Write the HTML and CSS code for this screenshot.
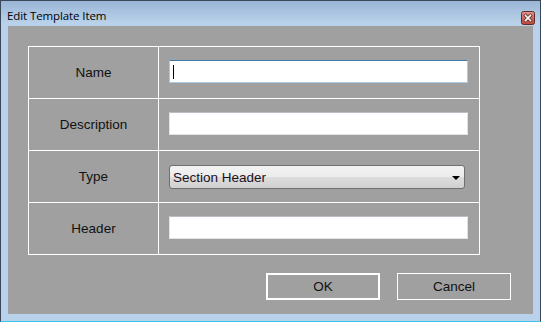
FILE: index.html
```html
<!DOCTYPE html>
<html lang="en">
<head>
  <meta charset="UTF-8">
  <meta name="viewport" content="width=device-width, initial-scale=1.0">
  <title>Edit Template Item</title>
  <link rel="stylesheet" href="styles.css">
</head>
<body>
  <div class="window">
    <div class="titlebar">
      <span class="title">Edit Template Item</span>
      <span class="close">
        <svg width="14" height="14" viewBox="0 0 14 14">
          <defs>
            <linearGradient id="red" x1="0" y1="0" x2="0" y2="1">
              <stop offset="0" stop-color="#e39a90"/>
              <stop offset="0.5" stop-color="#d0685c"/>
              <stop offset="1" stop-color="#c2463a"/>
            </linearGradient>
          </defs>
          <rect x="0.5" y="0.5" width="13" height="13" rx="2" fill="url(#red)" stroke="#5e2a2a"/>
          <path d="M4.5 4.5 L9.5 9.5 M9.5 4.5 L4.5 9.5" stroke="#6a2f2f" stroke-width="3.2" stroke-linecap="square"/>
          <path d="M4.5 4.5 L9.5 9.5 M9.5 4.5 L4.5 9.5" stroke="#ffffff" stroke-width="1.6" stroke-linecap="square"/>
        </svg>
      </span>
    </div>
    <div class="client">
      <div class="fields">
        <div class="cell label">Name</div>
        <div class="cell value"><div class="textbox focused"><span class="caret"></span></div></div>
        <div class="cell label">Description</div>
        <div class="cell value"><div class="textbox"></div></div>
        <div class="cell label">Type</div>
        <div class="cell value">
          <div class="combo"><span>Section Header</span><span class="arrow"></span></div>
        </div>
        <div class="cell label">Header</div>
        <div class="cell value"><div class="textbox"></div></div>
      </div>
      <div class="buttons">
        <button class="btn default">OK</button>
        <button class="btn">Cancel</button>
      </div>
    </div>
  </div>
</body>
</html>
```

FILE: styles.css
```css
body {
  margin: 0;
  background-color: #3a4756;
  font-family: "Liberation Sans", Arial, sans-serif;
}
.window {
  width: 541px;
  height: 322px;
  box-sizing: border-box;
  border: 1px solid #3a4756;
  border-bottom-color: #3cc6ec;
  background: linear-gradient(#9ab6d6 0, #b9d1ea 22px);
  padding: 0 7px 7px 7px;
}
.titlebar {
  height: 25px;
  display: flex;
  align-items: center;
  justify-content: space-between;
  margin-left: -1px;
  margin-right: -2px;
}
.title {
  font-family: "Open Sans", "Noto Sans", sans-serif;
  font-size: 11.5px;
  color: #000;
  letter-spacing: -0.1px;
  padding-top: 3px;
}
.close {
  display: flex;
  padding-top: 8px;
}
.client {
  background-color: #a0a0a0;
  height: 288px;
  padding: 20px 0 0 20px;
  box-sizing: border-box;
}
.fields {
  display: grid;
  grid-template-columns: 130px 321px;
  grid-auto-rows: 52px;
  width: max-content;
  border-right: 1px solid #fff;
  border-bottom: 1px solid #fff;
}
.cell {
  box-sizing: border-box;
  border-left: 1px solid #fff;
  border-top: 1px solid #fff;
}
.label {
  display: flex;
  align-items: center;
  justify-content: center;
  font-size: 13.5px;
  color: #111;
}
.value {
  padding: 13px 0 0 10px;
}
.textbox {
  width: 299px;
  height: 23px;
  box-sizing: border-box;
  background: #fff;
  border: 1px solid #dfe3e8;
  border-top-color: #b9bcc2;
  display: flex;
  align-items: center;
}
.textbox.focused {
  border-color: #a9cbe6;
  border-top-color: #3d7bad;
}
.caret {
  width: 1px;
  height: 14px;
  background: #000;
  margin-left: 3px;
}
.combo {
  width: 296px;
  height: 24px;
  box-sizing: border-box;
  margin-top: 1px;
  border: 1px solid #707070;
  border-radius: 3px;
  background: linear-gradient(#f3f3f3 0, #ebebeb 50%, #dddddd 51%, #d0d0d0 100%);
  display: flex;
  align-items: center;
  justify-content: space-between;
  padding: 0 4px 0 3px;
  font-size: 13.5px;
  color: #1a1020;
}
.arrow {
  width: 0;
  height: 0;
  border-left: 4px solid transparent;
  border-right: 4px solid transparent;
  border-top: 4px solid #000;
  margin-top: 2px;
}
.buttons {
  display: flex;
  justify-content: flex-end;
  gap: 17px;
  padding-right: 22px;
  margin-top: 18px;
}
.btn {
  width: 114px;
  height: 27px;
  box-sizing: border-box;
  background: transparent;
  border: 1px solid #fff;
  font-family: "Liberation Sans", Arial, sans-serif;
  font-size: 13.5px;
  color: #111;
  padding: 0;
}
.btn.default {
  border-width: 2px;
}
```
